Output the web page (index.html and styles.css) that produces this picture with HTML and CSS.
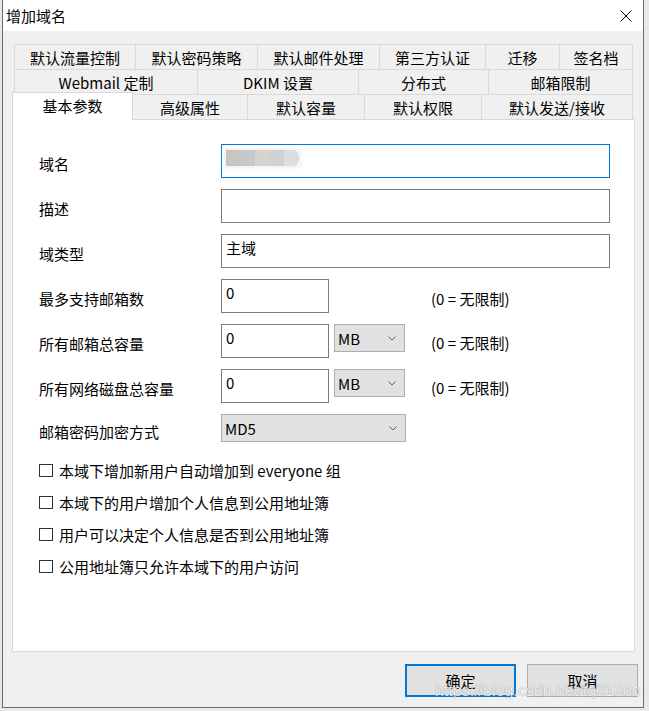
FILE: index.html
```html
<!DOCTYPE html>
<html lang="zh-CN">
<head>
    <meta charset="UTF-8">
    <title>增加域名</title>
    <link rel="stylesheet" href="styles.css">
</head>
<body>
    <div class="window">
        <div class="titlebar">
            <span class="title">增加域名</span>
            <svg class="close" width="12" height="12" viewBox="0 0 12 12">
                <path d="M0.5 0.5 L11.5 11.5 M11.5 0.5 L0.5 11.5" stroke="#000" stroke-width="1" fill="none"/>
            </svg>
        </div>

        <div class="dialog">
            <div class="tabs">
                <div class="tab-row row1">
                    <div class="tab">默认流量控制</div>
                    <div class="tab">默认密码策略</div>
                    <div class="tab">默认邮件处理</div>
                    <div class="tab">第三方认证</div>
                    <div class="tab">迁移</div>
                    <div class="tab">签名档</div>
                </div>
                <div class="tab-row row2">
                    <div class="tab">Webmail 定制</div>
                    <div class="tab">DKIM 设置</div>
                    <div class="tab">分布式</div>
                    <div class="tab">邮箱限制</div>
                </div>
                <div class="tab-row row3">
                    <div class="tab active">基本参数</div>
                    <div class="tab">高级属性</div>
                    <div class="tab">默认容量</div>
                    <div class="tab">默认权限</div>
                    <div class="tab">默认发送/接收</div>
                </div>
            </div>

            <div class="panel">
                <div class="field">
                    <div class="label">域名</div>
                    <div class="textbox wide focused">
                        <span class="blurred">
                            <span class="b1"></span><span class="b2"></span><span class="b3"></span><span class="b4"></span><span class="b5"></span>
                        </span>
                    </div>
                </div>
                <div class="field">
                    <div class="label">描述</div>
                    <div class="textbox wide"></div>
                </div>
                <div class="field">
                    <div class="label">域类型</div>
                    <div class="textbox wide">主域</div>
                </div>
                <div class="field">
                    <div class="label">最多支持邮箱数</div>
                    <div class="textbox small">0</div>
                    <div class="note far">(0 = 无限制)</div>
                </div>
                <div class="field">
                    <div class="label">所有邮箱总容量</div>
                    <div class="textbox small">0</div>
                    <div class="combo unit">MB
                        <svg class="chev" width="8" height="5" viewBox="0 0 8 5"><path d="M0.5 0.5 L4 4 L7.5 0.5" stroke="#606060" fill="none"/></svg>
                    </div>
                    <div class="note">(0 = 无限制)</div>
                </div>
                <div class="field">
                    <div class="label">所有网络磁盘总容量</div>
                    <div class="textbox small">0</div>
                    <div class="combo unit">MB
                        <svg class="chev" width="8" height="5" viewBox="0 0 8 5"><path d="M0.5 0.5 L4 4 L7.5 0.5" stroke="#606060" fill="none"/></svg>
                    </div>
                    <div class="note">(0 = 无限制)</div>
                </div>
                <div class="field last">
                    <div class="label">邮箱密码加密方式</div>
                    <div class="combo cipher">MD5
                        <svg class="chev" width="8" height="5" viewBox="0 0 8 5"><path d="M0.5 0.5 L4 4 L7.5 0.5" stroke="#606060" fill="none"/></svg>
                    </div>
                </div>

                <div class="checks">
                    <div class="check"><span class="box"></span>本域下增加新用户自动增加到 everyone 组</div>
                    <div class="check"><span class="box"></span>本域下的用户增加个人信息到公用地址簿</div>
                    <div class="check"><span class="box"></span>用户可以决定个人信息是否到公用地址簿</div>
                    <div class="check"><span class="box"></span>公用地址簿只允许本域下的用户访问</div>
                </div>
            </div>

            <div class="buttons">
                <div class="btn default">确定</div>
                <div class="btn">取消</div>
            </div>
        </div>

        <div class="watermark">https://blog.csdn.net/tq013oo</div>
    </div>
</body>
</html>
```

FILE: styles.css
```css
body {
    margin: 0;
    background: #e8e8e8;
    font-family: "Noto Sans CJK SC", "Noto Sans", sans-serif;
    font-size: 15px;
    color: #000;
}
.window {
    position: relative;
    box-sizing: border-box;
    margin-left: 2px;
    width: 642px;
    height: 708px;
    border: 1px solid #6b6b6b;
    border-top: none;
    background: #f0f0f0;
}
.titlebar {
    height: 31px;
    background: #fff;
    display: flex;
    align-items: center;
    justify-content: space-between;
    padding: 0 11px 0 3px;
}
.title {
    line-height: 20px;
    margin-top: 1px;
}
.close {
    display: block;
}

/* tab strip */
.tabs {
    padding: 13px 0 0 9px;
}
.tab-row {
    display: grid;
    grid-template-rows: 25px;
}
.row1 {
    margin-left: 2px;
    grid-template-columns: 121px 122px 122px 106px 74px 74px;
}
.row2 {
    margin-left: 2px;
    grid-template-columns: 183px 161px 130px 145px;
}
.row3 {
    grid-template-columns: 121px 114px 117px 117px 152px;
}
.tab {
    box-sizing: border-box;
    border-top: 1px solid #d9d9d9;
    border-left: 1px solid #d9d9d9;
    display: flex;
    align-items: center;
    justify-content: center;
    line-height: 20px;
    padding-top: 2px;
    white-space: nowrap;
}
.tab:last-child {
    border-right: 1px solid #d9d9d9;
}
.tab.active {
    position: relative;
    z-index: 1;
    margin: -2px 0 -1px;
    border-right: 1px solid #d9d9d9;
    background: #fff;
    padding-top: 0;
    padding-bottom: 1px;
}
.tab.active + .tab {
    border-left: none;
}

/* page */
.panel {
    box-sizing: border-box;
    margin-left: 9px;
    width: 623px;
    height: 533px;
    border: 1px solid #d9d9d9;
    background: #fff;
    padding: 24px 0 0 26px;
}
.field {
    display: flex;
    align-items: flex-start;
    height: 34px;
    margin-bottom: 11px;
}
.field.last {
    height: 28px;
    margin-bottom: 0;
}
.label {
    width: 182px;
    flex: none;
    line-height: 20px;
    padding-top: 10px;
}
.field.last .label {
    padding-top: 8px;
}
.textbox {
    box-sizing: border-box;
    height: 34px;
    border: 1px solid #7a7a7a;
    background: #fff;
    padding: 3px 4px;
    line-height: 20px;
}
.textbox.wide {
    width: 389px;
}
.textbox.small {
    width: 108px;
}
.textbox.focused {
    border-color: #0078d7;
}
.blurred {
    display: flex;
    margin-top: 2px;
    height: 16px;
    width: 73px;
    box-shadow: 0 0 3px 2px #eef2f6;
}
.blurred span {
    flex: 1;
}
.b1 { background: #c9c5c1; }
.b2 { background: #c5c9ce; }
.b3 { background: #d6d3d1; }
.b4 { background: #d0d1d1; }
.b5 { background: #dcdddc; border-radius: 0 6px 6px 0; }

.combo {
    box-sizing: border-box;
    position: relative;
    height: 28px;
    border: 1px solid #adadad;
    background: #e1e1e1;
    padding: 0 3px;
    line-height: 27px;
}
.combo.unit {
    width: 71px;
    margin-left: 5px;
}
.combo.cipher {
    width: 185px;
    height: 28px;
}
.chev {
    position: absolute;
    right: 8px;
    top: 11px;
}
.note {
    margin-left: 26px;
    line-height: 20px;
    padding-top: 9px;
}
.note.far {
    margin-left: 102px;
    padding-top: 10px;
}

/* checkboxes */
.checks {
    margin-top: 12px;
}
.check {
    display: flex;
    align-items: center;
    height: 32px;
}
.box {
    box-sizing: border-box;
    width: 14px;
    height: 13px;
    border: 1px solid #333;
    background: #fff;
    margin-right: 6px;
}

/* footer */
.buttons {
    display: flex;
    justify-content: flex-end;
    gap: 11px;
    margin-top: 12px;
    padding-right: 5px;
}
.btn {
    box-sizing: border-box;
    width: 111px;
    height: 33px;
    border: 1px solid #adadad;
    background: #e1e1e1;
    display: flex;
    align-items: center;
    justify-content: center;
    line-height: 20px;
}
.btn.default {
    border: 2px solid #0078d7;
}
.watermark {
    position: absolute;
    left: 432px;
    top: 682px;
    font-family: "Liberation Sans", Arial, sans-serif;
    font-size: 16px;
    line-height: 18px;
    color: rgba(255, 255, 255, 0.85);
    text-shadow: 0 0 1px rgba(0, 0, 0, 0.45);
    white-space: nowrap;
}
```
